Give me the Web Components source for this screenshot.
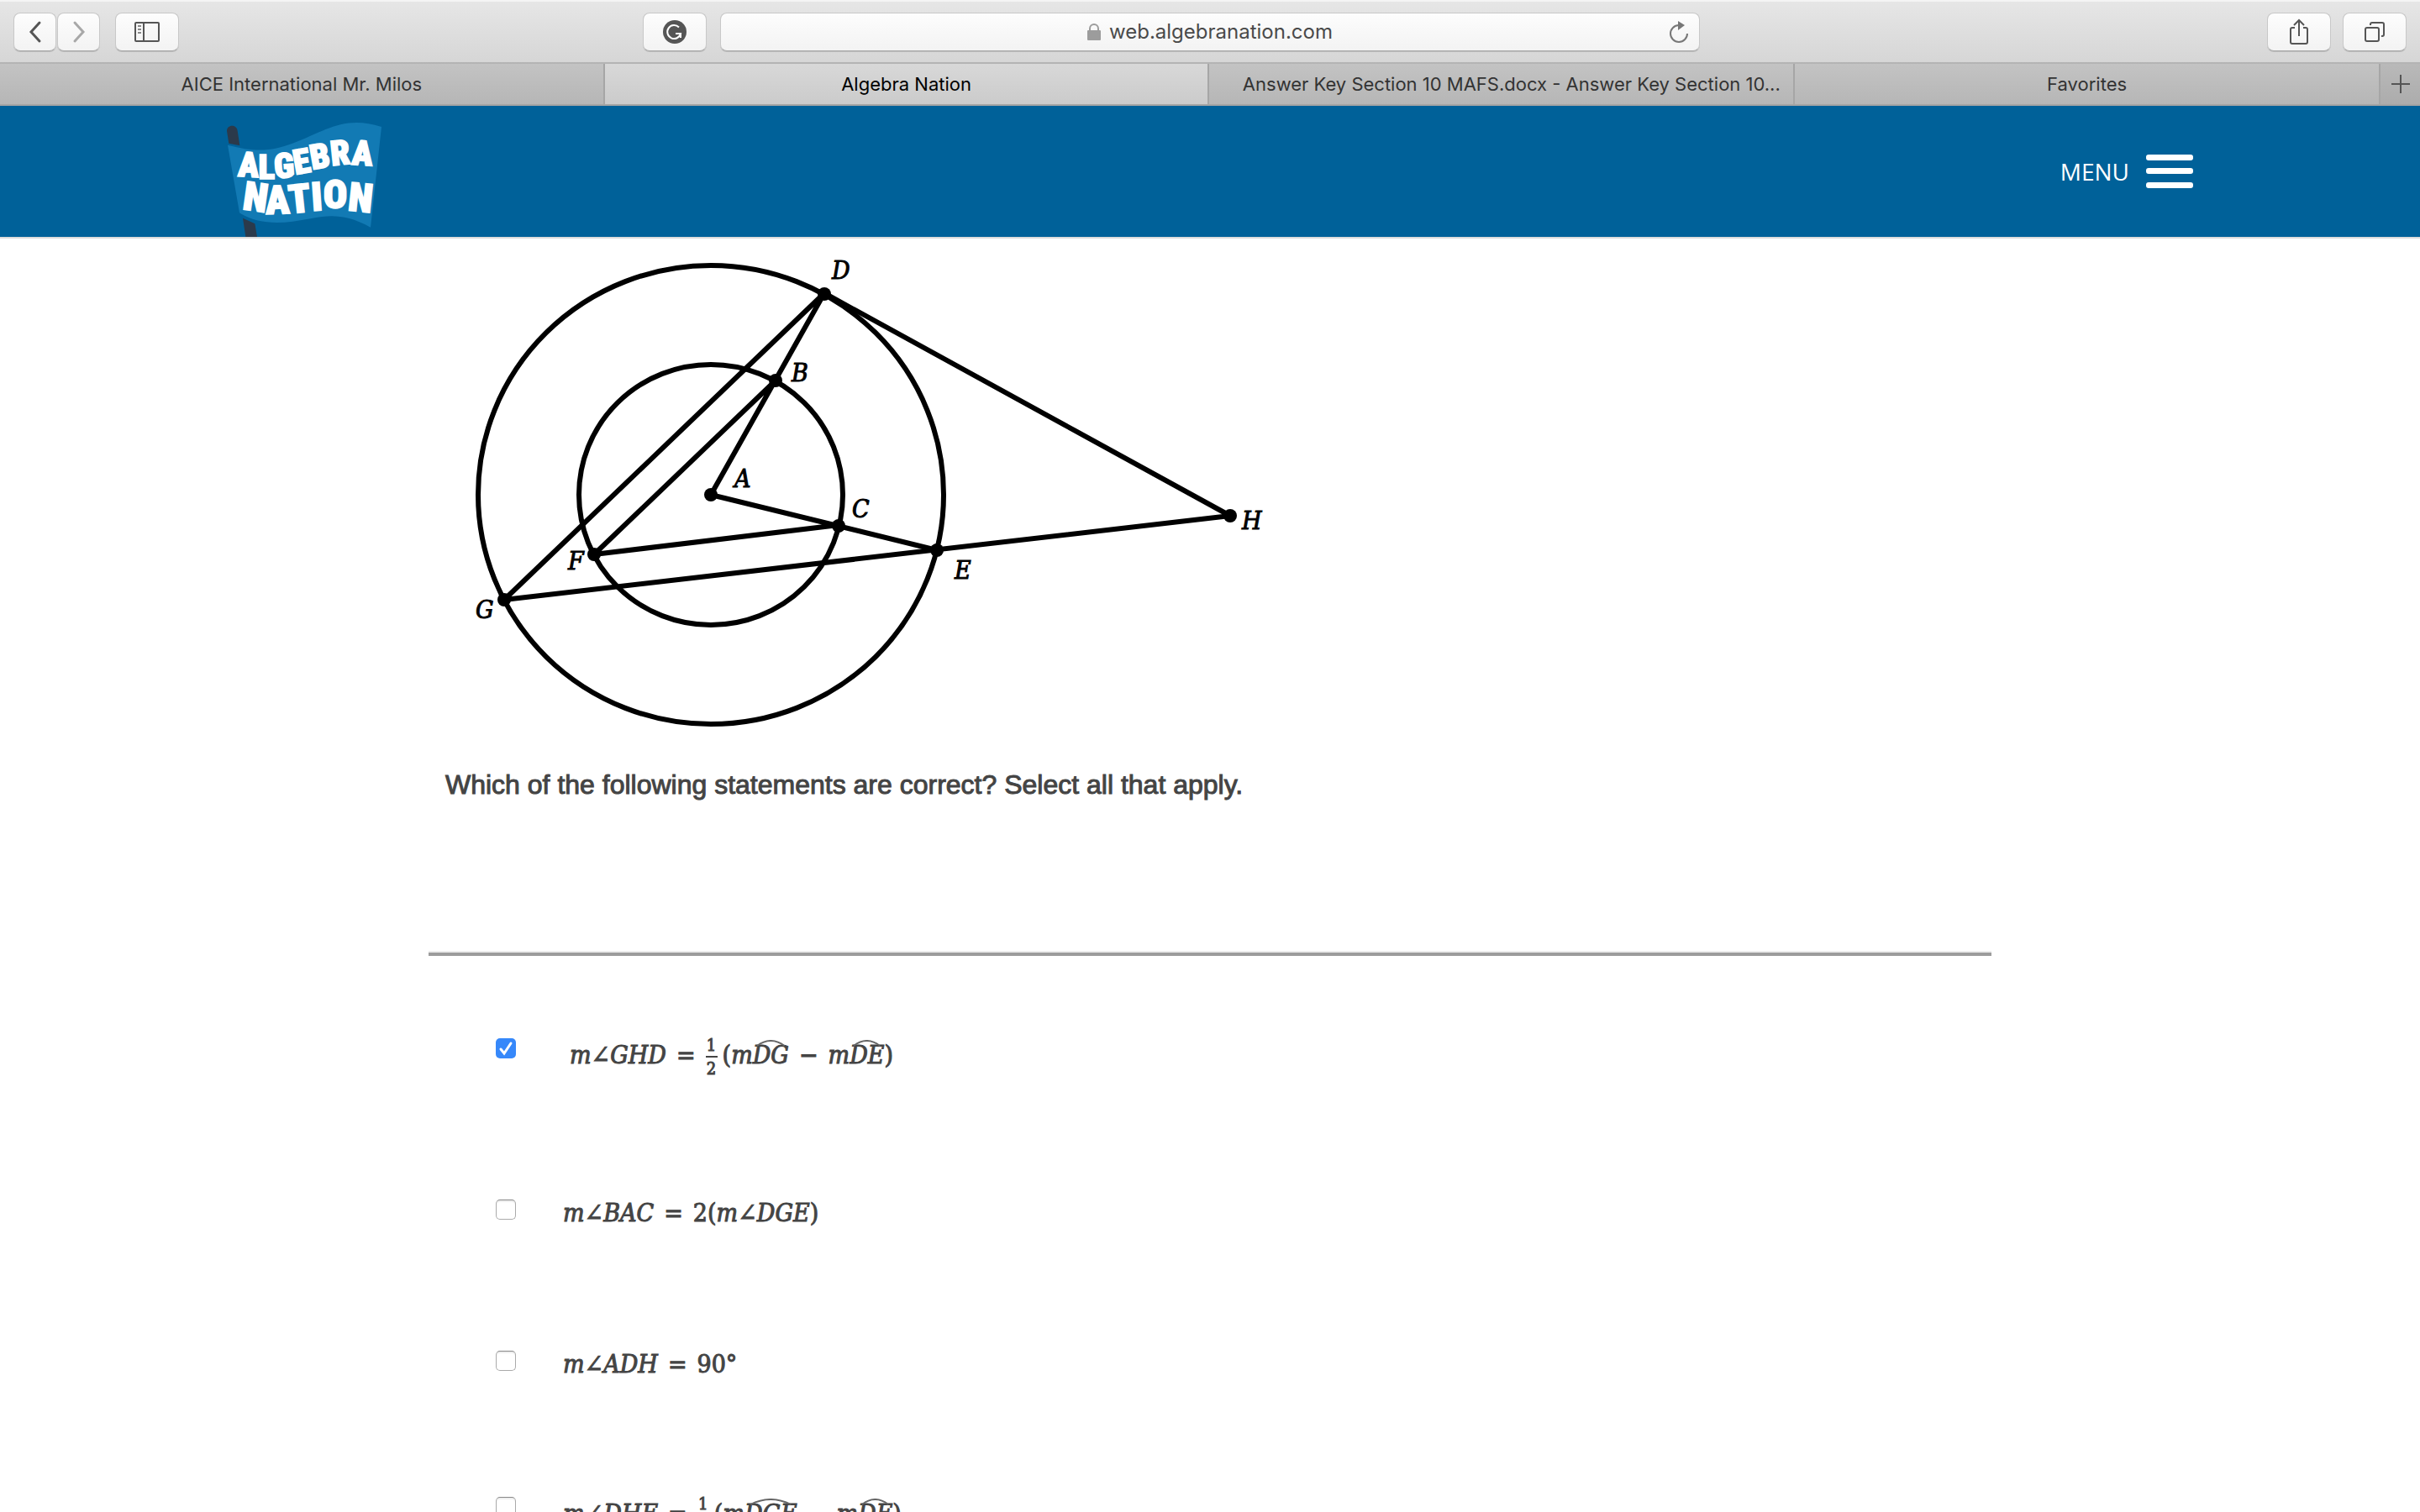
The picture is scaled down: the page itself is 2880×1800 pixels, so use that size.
<!DOCTYPE html>
<html lang="en">
<head>
<meta charset="utf-8">
<title>Algebra Nation</title>
<style>
  body { margin: 0; background: #fff; height: 100vh; overflow: hidden; }
</style>
</head>
<body>
<browser-toolbar></browser-toolbar>
<tab-strip>
  <browser-tab>AICE International Mr. Milos</browser-tab>
  <browser-tab active>Algebra Nation</browser-tab>
  <browser-tab cut>Answer Key Section 10 MAFS.docx - Answer Key Section 10...</browser-tab>
  <browser-tab>Favorites</browser-tab>
</tab-strip>
<site-header></site-header>
<quiz-question>
  <circle-figure slot="figure"></circle-figure>
  Which of the following statements are correct? Select all that apply.
  <answer-option slot="answers" checked inset fraction><i>m</i>∠<i>GHD</i><b>=</b><math-half></math-half>(<i>m</i><math-arc>DG</math-arc><b>−</b><i>m</i><math-arc>DE</math-arc>)</answer-option>
  <answer-option slot="answers"><i>m</i>∠<i>BAC</i><b>=</b>2(<i>m</i>∠<i>DGE</i>)</answer-option>
  <answer-option slot="answers"><i>m</i>∠<i>ADH</i><b>=</b>90°</answer-option>
  <answer-option slot="answers" fraction><i>m</i>∠<i>DHE</i><b>=</b><math-half></math-half>(<i>m</i><math-arc>DGE</math-arc><b>−</b><i>m</i><math-arc>DE</math-arc>)</answer-option>
</quiz-question>

<script>
(() => {
  const define = (name, html, setup) => {
    customElements.define(name, class extends HTMLElement {
      connectedCallback() {
        if (this.shadowRoot) return;
        this.attachShadow({ mode: 'open' }).innerHTML = html;
        if (setup) setup(this, this.shadowRoot);
      }
    });
  };

  define('browser-toolbar', `
    <style>
      :host {
        display: grid;
        grid-template-columns: 1fr minmax(0, 1166px) 1fr;
        gap: 16px;
        align-items: center;
        box-sizing: border-box;
        height: 76px;
        padding: 0 16px;
        border-top: 2px solid #f4f4f4;
        border-bottom: 2px solid #b4b4b4;
        background: linear-gradient(#e6e6e6, #d6d6d6);
        font: 24px/32px Inter, sans-serif;
      }
      button, .address {
        box-sizing: border-box;
        height: 46px;
        padding: 0;
        border: 1px solid #c8c8c8;
        border-bottom-color: #a8a8a8;
        border-radius: 8px;
        background: linear-gradient(#fdfdfd, #f3f3f3);
        box-shadow: 0 1px 0 #bcbcbc;
      }
      button { width: 76px; display: flex; align-items: center; justify-content: center; }
      .left, .right { display: flex; }
      .left .step { width: 51px; margin-right: 1px; }
      .left .side { margin-left: 17px; }
      .left .plugin { margin-left: auto; }
      .right { justify-content: flex-end; gap: 14px; }
      .address { display: grid; grid-template-columns: 40px 1fr 40px; align-items: center; padding: 0 4px; }
      .host { grid-column: 2; display: flex; align-items: center; justify-content: center; gap: 10px; }
      input {
        field-sizing: content;
        padding: 0;
        border: 0;
        background: none;
        color: #4a4a4a;
        font: inherit;
      }
      .address button { width: 40px; height: 40px; border: 0; background: none; box-shadow: none; }
      svg { fill: none; stroke: #555; stroke-width: 2; display: block; }
    </style>
    <div class="left">
      <button class="step" aria-label="Back"><svg width="16" height="28"><path d="M13 3 3 14 13 25" stroke-width="3" stroke-linecap="round"/></svg></button>
      <button class="step" aria-label="Forward"><svg width="16" height="28"><path d="M3 3 13 14 3 25" stroke="#a8a8a8" stroke-width="3" stroke-linecap="round"/></svg></button>
      <button class="side" aria-label="Sidebar"><svg width="32" height="26"><rect x="2" y="2" width="28" height="22" rx="1"/><path d="M12 2V24"/><path d="M5 6h4M5 10h4M5 14h4" stroke="#888"/></svg></button>
      <button class="plugin" aria-label="Grammarly"><svg width="30" height="30"><circle cx="15" cy="15" r="14" fill="#555" stroke="none"/><path d="M20 9.500A8 8 0 1 0 22 17H16M22 16v6" stroke="#fff"/></svg></button>
    </div>
    <div class="address">
      <div class="host">
        <svg width="16" height="22"><rect y="9" width="16" height="12" rx="1" fill="#9c9c9c" stroke="none"/><path d="M3 10V7a5 5 0 0 1 10 0v3" stroke="#9c9c9c"/></svg>
        <input aria-label="Address" value="web.algebranation.com">
      </div>
      <button aria-label="Reload"><svg width="26" height="28"><path d="M13 6A10 10 0 1 0 23 16" stroke="#777"/><path d="M12 1 20 6 12 12Z" fill="#777" stroke="none"/></svg></button>
    </div>
    <div class="right">
      <button aria-label="Share"><svg width="26" height="34"><path d="M8 12H5a2 2 0 0 0-2 2V29a2 2 0 0 0 2 2H21a2 2 0 0 0 2-2V14a2 2 0 0 0-2-2H18M13 22V3M7 9 13 3 19 9"/></svg></button>
      <button aria-label="Show all tabs"><svg width="28" height="28"><rect x="3" y="9" width="16" height="16" rx="2"/><path d="M9 6V5a2 2 0 0 1 2-2H23a2 2 0 0 1 2 2V17a2 2 0 0 1-2 2H22"/></svg></button>
    </div>`);

  define('tab-strip', `
    <style>
      :host {
        display: flex;
        box-sizing: border-box;
        height: 50px;
        border-bottom: 2px solid #a4a4a4;
        background: linear-gradient(#c3c3c3, #b6b6b6);
      }
      nav { display: flex; flex: 1; }
      button {
        width: 49px;
        padding: 0;
        border: 0;
        border-left: 2px solid #a6a6a6;
        background: linear-gradient(#b9b9b9, #acacac);
      }
      svg { display: block; margin: auto; stroke: #555; stroke-width: 2; }
    </style>
    <nav><slot></slot></nav>
    <button aria-label="New tab"><svg width="24" height="24"><path d="M12 1V23M1 12H23"/></svg></button>`);

  define('browser-tab', `
    <style>
      :host { display: block; flex: 697 1 0; min-width: 0; border-left: 2px solid #a6a6a6; }
      :host(:first-child) { border-left: 0; flex-grow: 720; }
      :host([active]) { flex-grow: 720; background: linear-gradient(#d8d8d8, #cbcbcb); }
      a {
        display: block;
        overflow: hidden;
        color: #333;
        font: 22px/48px Inter, sans-serif;
        text-align: center;
        text-decoration: none;
        white-space: nowrap;
      }
      :host([active]) a { color: #000; }
      :host([cut]) a { padding-left: 24px; }
    </style>
    <a href="#"><slot></slot></a>`);

  define('site-header', `
    <style>
      :host { display: block; background: #006199; border-bottom: 2px solid #dcdcdc; }
      div {
        display: flex;
        align-items: center;
        justify-content: space-between;
        max-width: 2340px;
        margin: 0 auto;
      }
      svg { display: block; }
      button {
        display: flex;
        align-items: center;
        gap: 20px;
        padding: 0;
        border: 0;
        background: none;
        color: #fff;
        font: 28px/40px "Open Sans", sans-serif;
      }
      text { font-family: "Roboto Condensed", "Open Sans Condensed", Lato, sans-serif; font-weight: 900; fill: #fff; stroke: #fff; stroke-width: 5; }
    </style>
    <div>
      <a href="#" aria-label="Algebra Nation">
        <svg width="186" height="156" viewBox="90 3 558 468">
          <path d="M90 93C90 68 125 68 128 92L136 145 97 137ZM147 404 190 424 198 471H157Z" fill="#2b3a4b"/>
          <path d="M93 143C190 168 245 168 330 135 440 93 510 35 642 78L603 437C480 370 420 405 325 416 255 425 190 420 135 385Z" fill="#127ab4"/>
          <text font-size="123" x="128" y="254 265 262 249 231 217 212" rotate="3 0 -4 -10 -10 -6 4">ALGEBRA</text>
          <text font-size="142" x="143" y="372 390 388 378 370 376" rotate="8 -2 -6 -4 0 6">NATION</text>
        </svg>
      </a>
      <button>MENU
        <svg width="56" height="40" fill="#fff"><rect width="56" height="7" rx="3"/><rect y="16" width="56" height="7" rx="3"/><rect y="33" width="56" height="7" rx="3"/></svg>
      </button>
    </div>`);

  define('circle-figure', `
    <style>
      :host { display: block; }
      svg { display: block; }
      text { font: italic 30px/40px "DejaVu Serif Condensed", "Liberation Serif", serif; stroke: #000; stroke-width: 1; }
    </style>
    <svg width="1000" height="600" viewBox="530 284 1000 600" role="img" aria-label="Concentric circles with center A">
      <g fill="none" stroke="#000" stroke-width="6">
        <ellipse cx="846" cy="589" rx="277" ry="273"/>
        <ellipse cx="846" cy="589" rx="157" ry="155"/>
        <path d="M600 714 981 349 846 589 1115 655M981 349 1464 614 600 714M923 453 707 660 998 625" stroke-linejoin="round"/>
      </g>
      <circle cx="981" cy="350" r="8"/><circle cx="923" cy="453" r="8"/><circle cx="846" cy="589" r="8"/><circle cx="998" cy="626" r="8"/>
      <circle cx="707" cy="660" r="8"/><circle cx="600" cy="714" r="8"/><circle cx="1115" cy="655" r="8"/><circle cx="1464" cy="614" r="8"/>
      <text x="990" y="332">D</text><text x="942" y="454">B</text><text x="874" y="580">A</text><text x="1014" y="616">C</text>
      <text x="1478" y="630">H</text><text x="1136" y="689">E</text><text x="676" y="678">F</text><text x="566" y="736">G</text>
    </svg>`);

  define('quiz-question', `
    <style>
      :host { display: block; max-width: 1860px; margin: 0 auto; }
      slot[name=figure] { display: block; padding-left: 20px; }
      p { margin: 0; padding: 30px 20px 178px; color: #444; font: 32px/40px "Liberation Sans", sans-serif; -webkit-text-stroke: 1px #444; }
      hr { margin: 0 0 102px; border: 0; border-top: 2px solid #ececec; height: 4px; background: #9c9c9c; }
      fieldset { display: grid; gap: 144px; margin: 0; padding: 0 80px; border: 0; }
    </style>
    <slot name="figure"></slot>
    <p><slot></slot></p>
    <hr>
    <fieldset aria-label="Answers"><slot name="answers"></slot></fieldset>`);

  define('answer-option', `
    <style>
      :host { display: block; }
      /* fractions stand taller than the line, so those rows start higher */
      :host([fraction]) { margin: -6px 0 8px; }
      label { display: flex; align-items: flex-start; gap: 56px; }
      input {
        appearance: none;
        flex: none;
        box-sizing: border-box;
        width: 24px;
        height: 24px;
        margin: 2px 0 0;
        border: 1px solid #aaa;
        border-top-color: #888;
        border-radius: 5px;
        background: #fff;
        box-shadow: inset 0 2px 1px #eee;
      }
      input:checked {
        border: 0;
        box-shadow: none;
        background: #3688fa url('data:image/svg+xml,<svg xmlns="http://www.w3.org/2000/svg" viewBox="0 0 24 24"><path d="M6 13 10 18 18 6" fill="none" stroke="white" stroke-width="3" stroke-linecap="round"/></svg>');
      }
      span {
        display: block;
        color: #444;
        font: 30px/36px "DejaVu Serif Condensed", "Liberation Serif", serif;
        -webkit-text-stroke: 1px #444;
        white-space: nowrap;
      }
      :host([fraction]) span { padding-top: 4px; }
      :host([inset]) span { padding-left: 8px; }
      ::slotted(b) { margin: 0 12px; font-weight: 400; }
    </style>
    <label><input type="checkbox"><span><slot></slot></span></label>`, (el, root) => {
    root.querySelector('input').checked = el.hasAttribute('checked');
  });

  define('math-half', `
    <style>
      :host { display: inline-grid; width: 14px; margin: -14px 6px -14px 0; vertical-align: middle; font-size: 20px; line-height: 26px; text-align: center; }
      span + span { border-top: 2px solid #444; }
    </style>
    <span>1</span><span>2</span>`);

  define('math-arc', `
    <style>
      :host { position: relative; display: inline-block; font-style: italic; }
      svg { position: absolute; left: 10%; top: 0; width: 80%; height: 8px; fill: none; stroke: #666; stroke-width: 2; }
    </style>
    <slot></slot><svg viewBox="0 0 40 8" preserveAspectRatio="none"><path d="M1 7Q20-5 39 7"/></svg>`);
})();
</script>
</body>
</html>
